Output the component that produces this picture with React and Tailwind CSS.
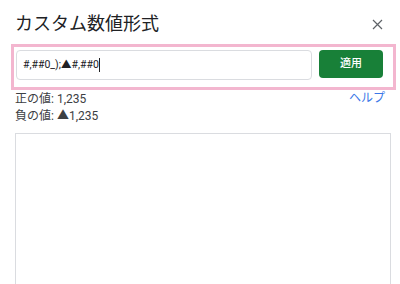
export default function App() {
  return (
    <div
      className="w-[400px] h-[284px] bg-white overflow-hidden text-[#202124]"
      style={{ fontFamily: "Roboto, 'Noto Sans CJK JP', sans-serif" }}
    >
      <div className="flex items-center justify-between pl-[15px] pr-[17px] pt-[11px]">
        <h1 className="text-[18px] leading-[26px] font-normal text-[#202124]">カスタム数値形式</h1>
        <svg width="11" height="11" viewBox="0 0 11 11" className="text-[#5f6368]">
          <path d="M1 1 L10 10 M10 1 L1 10" stroke="currentColor" strokeWidth="1.2" fill="none" />
        </svg>
      </div>

      <div className="ml-[11px] mr-[4px] mt-[7px] border-[3px] border-[#f3b6cf] flex items-start gap-[7px] pl-[2px] pt-[3px] pb-[7px] pr-[10px]">
        <div className="flex-1 h-[30px] border border-[#dadce0] rounded-[4px] flex items-center pl-[6px] text-[10.5px] text-[#202124]">
          <span>#,##0_);▲#,##0</span>
          <span className="w-px h-[14px] bg-[#202124]" />
        </div>
        <button className="w-[64px] h-[28px] rounded-[4px] bg-[#188038] text-white text-[11px] font-medium flex items-center justify-center">
          適用
        </button>
      </div>

      <div className="flex justify-between pl-[15px] pr-[15px] mt-[1px]">
        <div className="text-[12px] leading-[17px] text-[#3c4043]">
          <div>正の値: 1,235</div>
          <div>負の値: ▲1,235</div>
        </div>
        <a className="text-[12px] leading-[15px] text-[#3b78e7]">ヘルプ</a>
      </div>

      <div className="ml-[15px] w-[376px] h-[200px] mt-[8px] border border-[#dadce0] bg-white" />
    </div>
  );
}
